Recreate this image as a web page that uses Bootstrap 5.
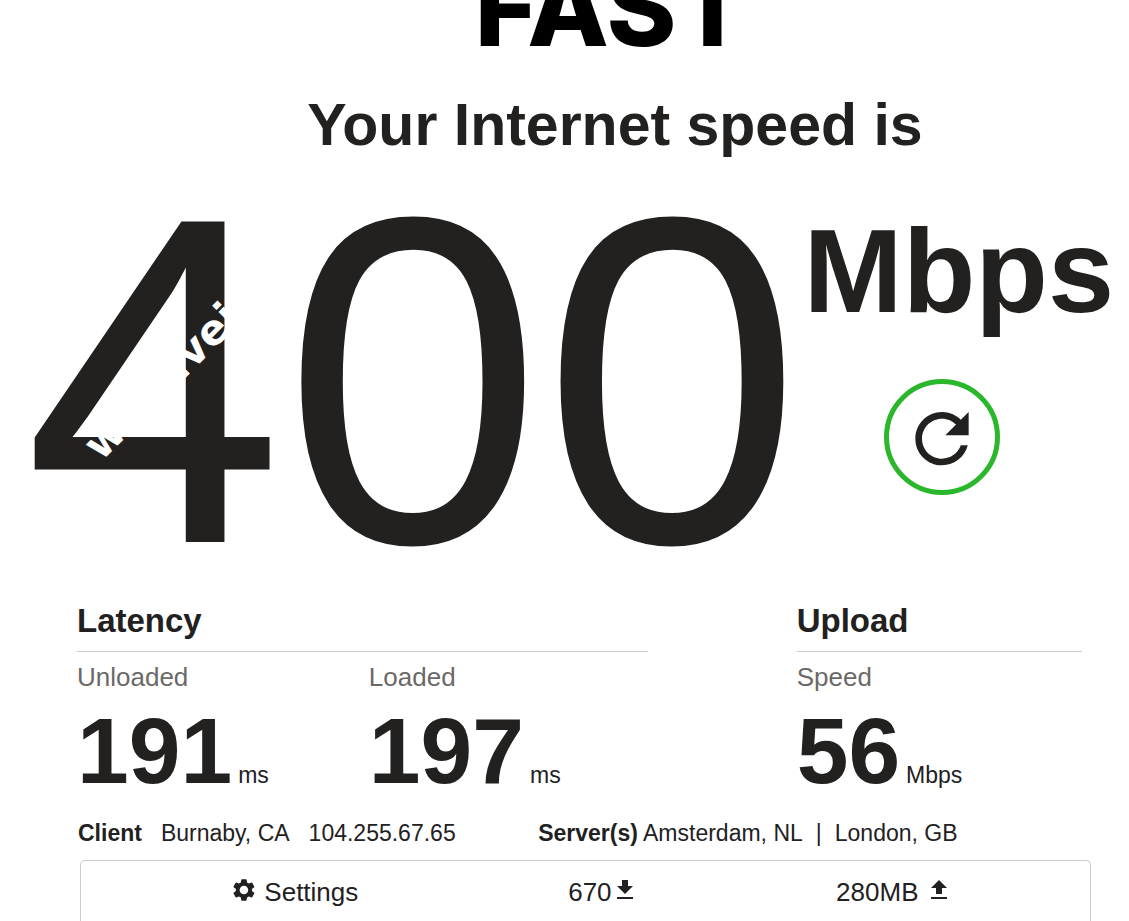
<!DOCTYPE html>
<html lang="en">
<head>
<meta charset="utf-8">
<meta name="viewport" content="width=device-width, initial-scale=1">
<title>FAST</title>
<link href="https://cdn.jsdelivr.net/npm/bootstrap@5.3.0/dist/css/bootstrap.min.css" rel="stylesheet">
<style>
  body { font-family: "Liberation Sans", Arial, sans-serif; color: #22211f; background: #fff; overflow-x: hidden; }
  .page { height: 100vh; overflow: hidden; }
  .brand-bar { height: 95px; overflow: hidden; padding-left: 94px; }
  .brand { font-family: Inter, sans-serif; font-weight: 800; font-size: 106px; line-height: 106px; color: #000; margin-bottom: 34px; }
  .headline { font-size: 59px; line-height: 60px; padding-left: 101px; margin-bottom: 26px; }
  .hero { padding-left: 24px; gap: 2px; }
  .speed { font-size: 466px; line-height: 400px; }
  .unit { font-size: 119px; line-height: 120px; margin-top: 30px; }
  .retry { width: 116px; height: 116px; border: 5px solid #2bb72b; margin: 48px 0 0 80px; color: inherit; background: #fff; }
  .stamp { left: 106px; top: 244px; color: #fff; font: bold 42px/42px "DejaVu Sans", sans-serif; transform: rotate(-45deg); transform-origin: 0 100%; pointer-events: none; }
  .details { padding: 20px 47px 0 77px; }
  .stats { display: grid; grid-template-columns: 2fr 1fr; column-gap: 149px; }
  .pair { display: grid; grid-template-columns: 1fr 1fr; column-gap: 13px; }
  .group-title { font-size: 33px; line-height: 40px; padding-bottom: 10px; margin-bottom: 9px; border-bottom: 1px solid #ccc; }
  .label { font-size: 26px; line-height: 32px; color: #6b6967; margin-bottom: 12px; }
  .figure-row { gap: 6px; }
  .figure-num { font-size: 93px; line-height: 93px; }
  .figure-unit { font-size: 23px; }
  .ends { display: grid; grid-template-columns: 11fr 13fr; font-size: 23px; line-height: 28px; margin-top: 21px; padding-left: 1px; white-space: nowrap; }
  .client { gap: 19px; }
  .servers { gap: 13px; }
  .panel { margin: 13px 38px 0 80px; border: 1px solid #ccc; border-bottom: 0; border-radius: 5px 5px 0 0; }
  .tools { display: grid; grid-template-columns: 336fr 268fr 254fr; padding: 15px 0 0 15%; font-size: 26px; line-height: 32px; }
  .tools a, .tools a:hover { color: inherit; }
  .gear { margin-right: 6px; }
</style>
</head>
<body>
<div class="page d-flex flex-column">
  <header class="brand-bar d-flex justify-content-center align-items-end flex-shrink-0">
    <div class="brand">FAST</div>
  </header>
  <main class="flex-shrink-0">
    <h1 class="headline fw-bold text-center">Your Internet speed is</h1>
    <section class="hero position-relative d-flex align-items-start">
      <div class="speed">400</div>
      <div>
        <div class="unit fw-bold">Mbps</div>
        <button type="button" class="retry rounded-circle p-0 d-flex align-items-center justify-content-center" aria-label="Run the test again">
          <svg width="80" height="80" viewBox="0 -0.5 24 24" fill="currentColor" aria-hidden="true"><path d="M17.65 6.35C16.2 4.9 14.21 4 12 4c-4.42 0-7.99 3.58-7.99 8s3.57 8 7.99 8c3.73 0 6.84-2.55 7.73-6h-2.08c-.82 2.33-3.04 4-5.65 4-3.31 0-6-2.69-6-6s2.69-6 6-6c1.66 0 3.14.69 4.22 1.78L13 11h7V4l-2.35 2.35z"/></svg>
        </button>
      </div>
      <div class="stamp position-absolute">www.vei</div>
    </section>
    <section class="details">
      <div class="stats">
        <div>
          <h2 class="group-title fw-bold">Latency</h2>
          <div class="pair">
            <div>
              <div class="label">Unloaded</div>
              <div class="figure-row d-flex align-items-baseline"><span class="figure-num fw-bold">191</span><span class="figure-unit">ms</span></div>
            </div>
            <div>
              <div class="label">Loaded</div>
              <div class="figure-row d-flex align-items-baseline"><span class="figure-num fw-bold">197</span><span class="figure-unit">ms</span></div>
            </div>
          </div>
        </div>
        <div>
          <h2 class="group-title fw-bold">Upload</h2>
          <div class="label">Speed</div>
          <div class="figure-row d-flex align-items-baseline"><span class="figure-num fw-bold">56</span><span class="figure-unit">Mbps</span></div>
        </div>
      </div>
      <div class="ends">
        <div class="client d-flex"><strong>Client</strong><span>Burnaby, CA</span><span>104.255.67.65</span></div>
        <div class="servers d-flex"><span><strong>Server(s)</strong> Amsterdam, NL</span><span>|</span><span>London, GB</span></div>
      </div>
    </section>
  </main>
  <footer class="panel flex-grow-1">
    <div class="tools">
      <a href="#" class="d-flex text-decoration-none">
        <svg class="gear" width="26" height="28" viewBox="1 -1 24 26" fill="currentColor" aria-hidden="true"><path d="M19.43 12.98c.04-.32.07-.64.07-.98s-.03-.66-.07-.98l2.11-1.65c.19-.15.24-.42.12-.64l-2-3.46c-.12-.22-.39-.3-.61-.22l-2.49 1c-.52-.4-1.08-.73-1.69-.98l-.38-2.65A.49.49 0 0 0 14 2h-4c-.25 0-.46.18-.49.42l-.38 2.65c-.61.25-1.17.59-1.69.98l-2.49-1c-.23-.09-.49 0-.61.22l-2 3.46c-.13.22-.07.49.12.64l2.11 1.65c-.04.32-.07.65-.07.98s.03.66.07.98l-2.11 1.65c-.19.15-.24.42-.12.64l2 3.46c.12.22.39.3.61.22l2.49-1c.52.4 1.08.73 1.69.98l.38 2.65c.03.24.24.42.49.42h4c.25 0 .46-.18.49-.42l.38-2.65c.61-.25 1.17-.59 1.69-.98l2.49 1c.23.09.49 0 .61-.22l2-3.46c.12-.22.07-.49-.12-.64l-2.11-1.65zM12 16c-2.21 0-4-1.79-4-4s1.79-4 4-4 4 1.79 4 4-1.79 4-4 4z"/></svg>
        <span>Settings</span>
      </a>
      <div class="d-flex">
        <span>670</span>
        <svg class="ms-1 mt-1" width="18" height="22" viewBox="0 1 18 22" fill="currentColor" role="img" aria-label="downloaded"><path d="M6 1h6v6h5l-8 8-8-8h5zM1 18h16v2H1z"/></svg>
      </div>
      <div class="d-flex">
        <span>280MB</span>
        <svg class="ms-2 mt-1" width="22" height="22" viewBox="-4 1 22 22" fill="currentColor" role="img" aria-label="uploaded"><path d="M9 1l8 8h-5v6H6V9H1zM1 18h16v2H1z"/></svg>
      </div>
    </div>
  </footer>
</div>
<script src="https://cdn.jsdelivr.net/npm/bootstrap@5.3.0/dist/js/bootstrap.bundle.min.js"></script>
</body>
</html>
